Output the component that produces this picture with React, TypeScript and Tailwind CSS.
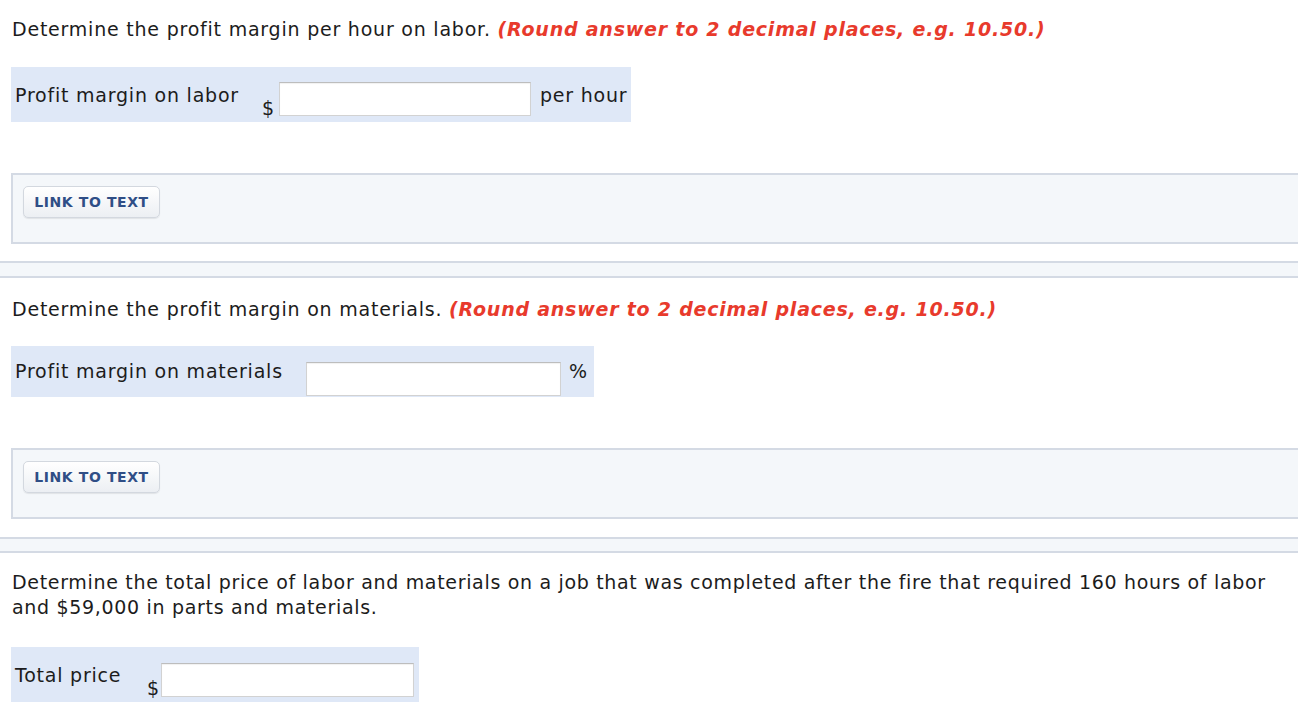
import React from "react";

const Hint = () => (
  <span className="font-bold italic text-[#e83a2c]">
    (Round answer to 2 decimal places, e.g. 10.50.)
  </span>
);

const Input = ({ w }: { w: string }) => (
  <div
    className={`${w} h-[34px] bg-white border border-[#d2d2d2] border-t-[#bdbdbd] shadow-[inset_0_1px_1px_rgba(0,0,0,0.06)]`}
  />
);

const LinkBox = () => (
  <div className="ml-[11px] w-[1300px] h-[71px] border-2 border-r-0 border-[#d4dae4] bg-[#f4f7fa] pt-[11px] pl-[10px]">
    <div className="w-[137px] h-[32px] rounded-[5px] border border-[#d3d8df] bg-gradient-to-b from-white to-[#eceff3] shadow-[0_1px_1px_rgba(0,0,0,0.08)] flex items-center justify-center">
      <span className="text-[14px] font-bold tracking-[0.6px] text-[#2f4e86]">LINK TO TEXT</span>
    </div>
  </div>
);

const Sep = ({ h }: { h: string }) => (
  <div className={`w-full ${h} border-y-2 border-[#d4dae4] bg-[#f4f7fa]`} />
);

export default function App() {
  return (
    <div
      className="w-[1298px] h-[708px] overflow-hidden bg-white text-[#1c1c1c] text-[19px] leading-[24px] tracking-[0.78px]"
      style={{ fontFamily: '"DejaVu Sans", Verdana, sans-serif' }}
    >
      <p className="pt-[17px] pl-[12px] whitespace-nowrap">
        Determine the profit margin per hour on labor. <Hint />
      </p>

      <div className="mt-[26px] ml-[11px] w-[620px] h-[55px] bg-[#dfe8f7] flex items-start">
        <div className="w-[251px] pl-[4px] pt-[16px] whitespace-nowrap">Profit margin on labor</div>
        <div className="w-[17px] pt-[29px]">$</div>
        <div className="pt-[15px]">
          <Input w="w-[252px]" />
        </div>
        <div className="pl-[9px] pt-[16px] whitespace-nowrap">per hour</div>
      </div>

      <div className="mt-[51px]">
        <LinkBox />
      </div>
      <div className="mt-[17px]">
        <Sep h="h-[17px]" />
      </div>

      <p className="mt-[19px] pl-[12px] whitespace-nowrap">
        Determine the profit margin on materials. <Hint />
      </p>

      <div className="mt-[25px] ml-[11px] w-[583px] h-[51px] bg-[#dfe8f7] flex items-start">
        <div className="w-[295px] pl-[4px] pt-[13px] whitespace-nowrap">Profit margin on materials</div>
        <div className="pt-[16px]">
          <Input w="w-[255px]" />
        </div>
        <div className="pl-[8px] pt-[13px]">%</div>
      </div>

      <div className="mt-[51px]">
        <LinkBox />
      </div>
      <div className="mt-[18px]">
        <Sep h="h-[16px]" />
      </div>

      <p className="mt-[17px] pl-[12px] leading-[25px] tracking-[0.68px] whitespace-nowrap">
        Determine the total price of labor and materials on a job that was completed after the fire that required 160 hours of labor
        <br />
        and $59,000 in parts and materials.
      </p>

      <div className="mt-[27px] ml-[11px] w-[408px] h-[55px] bg-[#dfe8f7] flex items-start">
        <div className="w-[136px] pl-[4px] pt-[16px] whitespace-nowrap">Total price</div>
        <div className="w-[14px] pt-[29px]">$</div>
        <div className="pt-[16px]">
          <Input w="w-[253px]" />
        </div>
      </div>
    </div>
  );
}
